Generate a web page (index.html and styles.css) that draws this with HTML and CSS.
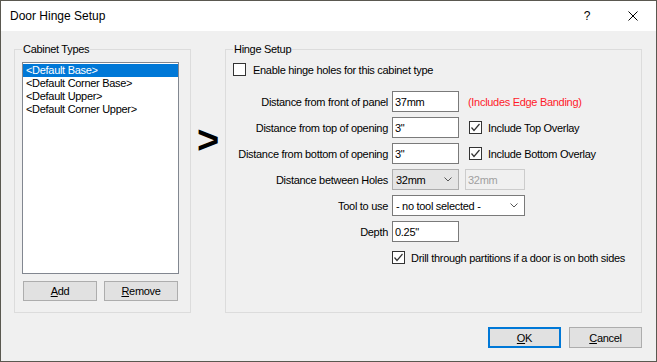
FILE: index.html
```html
<!DOCTYPE html>
<html lang="en">
<head>
    <meta charset="UTF-8">
    <title>Door Hinge Setup</title>
    <link rel="stylesheet" href="styles.css">
</head>
<body>
    <div class="window">
        <div class="titlebar">
            <span class="title">Door Hinge Setup</span>
            <span class="title-btn help">?</span>
            <span class="title-btn close">
                <svg width="10" height="10" viewBox="0 0 10 10"><path d="M0.5 0.5 L9.5 9.5 M9.5 0.5 L0.5 9.5" stroke="#000" stroke-width="1" fill="none"/></svg>
            </span>
        </div>
        <div class="dialog">
            <div class="main">
                <fieldset class="group group-types">
                    <legend>Cabinet Types</legend>
                    <ul class="listbox">
                        <li class="selected">&lt;Default Base&gt;</li>
                        <li>&lt;Default Corner Base&gt;</li>
                        <li>&lt;Default Upper&gt;</li>
                        <li>&lt;Default Corner Upper&gt;</li>
                    </ul>
                    <div class="list-buttons">
                        <button class="btn"><u>A</u>dd</button>
                        <button class="btn"><u>R</u>emove</button>
                    </div>
                </fieldset>

                <div class="arrow">&gt;</div>

                <fieldset class="group group-hinge">
                    <legend>Hinge Setup</legend>
                    <label class="check-row enable-row">
                        <span class="checkbox"></span>
                        <span>Enable hinge holes for this cabinet type</span>
                    </label>

                    <div class="form">
                        <span class="field-label">Distance from front of panel</span>
                        <div class="field">
                            <input class="text" type="text" value="37mm">
                            <span class="note">(Includes Edge Banding)</span>
                        </div>

                        <span class="field-label">Distance from top of opening</span>
                        <div class="field">
                            <input class="text" type="text" value="3&quot;">
                            <label class="check-row side-check">
                                <span class="checkbox checked"><svg width="11" height="11" viewBox="0 0 11 11"><path d="M1.5 5.5 L4 8.5 L9.5 2" stroke="#333" stroke-width="1.2" fill="none"/></svg></span>
                                <span>Include Top Overlay</span>
                            </label>
                        </div>

                        <span class="field-label">Distance from bottom of opening</span>
                        <div class="field">
                            <input class="text" type="text" value="3&quot;">
                            <label class="check-row side-check">
                                <span class="checkbox checked"><svg width="11" height="11" viewBox="0 0 11 11"><path d="M1.5 5.5 L4 8.5 L9.5 2" stroke="#333" stroke-width="1.2" fill="none"/></svg></span>
                                <span>Include Bottom Overlay</span>
                            </label>
                        </div>

                        <span class="field-label">Distance between Holes</span>
                        <div class="field">
                            <div class="combo combo-list">
                                <span>32mm</span>
                                <svg width="8" height="5" viewBox="0 0 8 5"><path d="M0.5 0.5 L4 4 L7.5 0.5" stroke="#555" stroke-width="1" fill="none"/></svg>
                            </div>
                            <input class="text text-disabled" type="text" value="32mm" disabled>
                        </div>

                        <span class="field-label">Tool to use</span>
                        <div class="field">
                            <div class="combo combo-tool">
                                <span>- no tool selected -</span>
                                <svg width="8" height="5" viewBox="0 0 8 5"><path d="M0.5 0.5 L4 4 L7.5 0.5" stroke="#555" stroke-width="1" fill="none"/></svg>
                            </div>
                        </div>

                        <span class="field-label">Depth</span>
                        <div class="field">
                            <input class="text" type="text" value="0.25&quot;">
                        </div>

                        <label class="check-row drill-row">
                            <span class="checkbox checked"><svg width="11" height="11" viewBox="0 0 11 11"><path d="M1.5 5.5 L4 8.5 L9.5 2" stroke="#333" stroke-width="1.2" fill="none"/></svg></span>
                            <span>Drill through partitions if a door is on both sides</span>
                        </label>
                    </div>
                </fieldset>
            </div>

            <div class="footer">
                <button class="btn btn-default"><u>O</u>K</button>
                <button class="btn"><u>C</u>ancel</button>
            </div>
        </div>
    </div>
</body>
</html>
```

FILE: styles.css
```css
body {
    margin: 0;
    padding: 0;
    font-family: 'Liberation Sans', Arial, sans-serif;
    font-size: 11px;
    letter-spacing: -0.3px;
    color: #000;
    background-color: #f0f0f0;
}

.window {
    width: 657px;
    height: 362px;
    box-sizing: border-box;
    border: 1px solid #5a5850;
    display: flex;
    flex-direction: column;
    background-color: #f0f0f0;
}

.titlebar {
    height: 30px;
    display: flex;
    align-items: center;
    background-color: #fff;
    letter-spacing: 0;
}

.title {
    flex: 1;
    padding-left: 9px;
    font-size: 12px;
}

.title-btn {
    width: 46px;
    height: 30px;
    display: flex;
    align-items: center;
    justify-content: center;
    font-size: 12px;
}

.dialog {
    flex: 1;
    display: flex;
    flex-direction: column;
    padding: 12px 13px 0 13px;
}

.main {
    display: flex;
}

.group {
    margin: 0;
    padding: 0 7px;
    height: 270px;
    box-sizing: border-box;
    border: 1px solid #dcdcdc;
    min-width: 0;
}

.group legend {
    padding: 0 1px;
    line-height: 13px;
}

.group-types {
    width: 177px;
    padding-right: 11px;
}

.group-hinge {
    width: 417px;
}

.listbox {
    list-style: none;
    margin: 6px 0 0 0;
    padding: 1px 0 0 0;
    height: 212px;
    box-sizing: border-box;
    border: 1px solid #828790;
    background-color: #fff;
}

.listbox li {
    height: 13px;
    line-height: 13px;
    padding-left: 3px;
}

.listbox li.selected {
    background-color: #0078d7;
    color: #fff;
}

.list-buttons {
    display: flex;
    justify-content: space-between;
    margin-top: 7px;
    padding: 0 1px;
}

.btn {
    width: 74px;
    height: 20px;
    padding: 0;
    font-family: inherit;
    font-size: 11px;
    letter-spacing: inherit;
    color: #000;
    background-color: #e1e1e1;
    border: 1px solid #adadad;
}

.arrow {
    width: 34px;
    padding-top: 78px;
    text-align: center;
    font-size: 38px;
    font-weight: bold;
    line-height: 38px;
}

.check-row {
    display: flex;
    align-items: center;
}

.checkbox {
    width: 13px;
    height: 13px;
    box-sizing: border-box;
    border: 1px solid #333;
    background-color: #fff;
    display: flex;
    align-items: center;
    justify-content: center;
    flex-shrink: 0;
}

.enable-row {
    margin: 7px 0 15px 0;
    height: 13px;
    gap: 7px;
}

.form {
    display: grid;
    grid-template-columns: 155px 1fr;
    column-gap: 4px;
    row-gap: 5px;
    grid-auto-rows: 21px;
}

.field-label {
    align-self: center;
    text-align: right;
    white-space: nowrap;
}

.field {
    display: flex;
    align-items: center;
}

.text {
    width: 67px;
    height: 21px;
    box-sizing: border-box;
    margin: 0;
    padding: 0 2px;
    font-family: inherit;
    font-size: 11px;
    letter-spacing: inherit;
    color: #000;
    border: 1px solid #7a7a7a;
    background-color: #fff;
    outline: none;
}

.text-disabled {
    width: 60px;
    margin-left: 6px;
    color: #a0a0a0;
    border-color: #ccc;
    background-color: #f0f0f0;
}

.note {
    margin-left: 9px;
    color: #ff1a2a;
}

.side-check {
    margin-left: 10px;
    gap: 6px;
}

.combo {
    height: 21px;
    box-sizing: border-box;
    display: flex;
    align-items: center;
    justify-content: space-between;
    padding: 0 6px 0 3px;
}

.combo-list {
    width: 67px;
    background-color: #e5e5e5;
    border: 1px solid #adadad;
}

.combo-tool {
    width: 133px;
    background-color: #fff;
    border: 1px solid #7a7a7a;
}

.drill-row {
    grid-column: 2;
    margin-top: 4px;
    height: 13px;
    gap: 6px;
    white-space: nowrap;
}

.footer {
    display: flex;
    justify-content: flex-end;
    gap: 8px;
    margin-top: 14px;
    padding-right: 1px;
}

.footer .btn {
    width: 73px;
    height: 21px;
}

.btn-default {
    border: 2px solid #0078d7;
}
```
